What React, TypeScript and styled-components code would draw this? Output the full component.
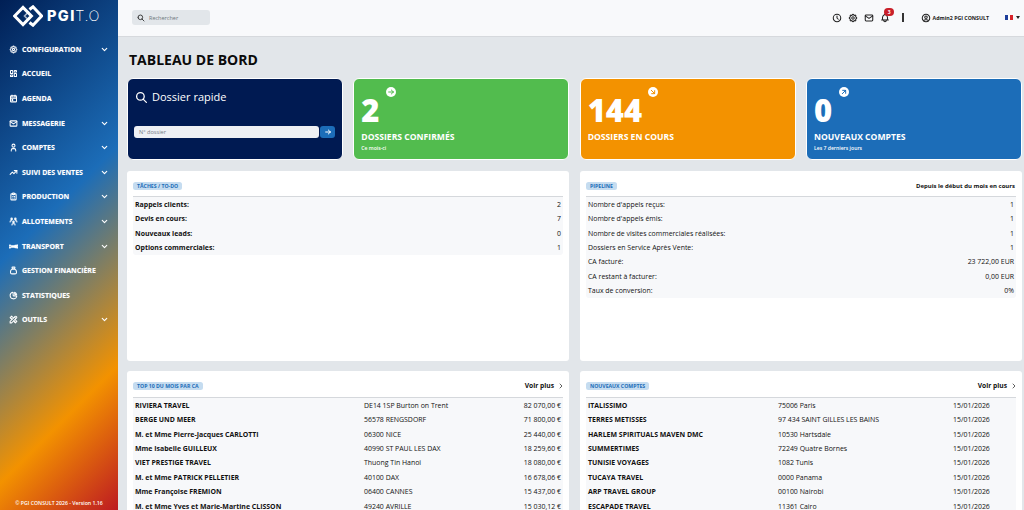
import React from "react";
import styled, { createGlobalStyle } from "styled-components";
import {
  TbSettings, TbLayoutDashboard, TbCalendarEvent, TbMail, TbUser, TbTrendingUp, TbClipboardList,
  TbUsersGroup, TbMoneybag, TbChartPie, TbTools, TbChevronDown, TbChevronRight, TbSearch,
  TbArrowRight, TbArrowDownRight, TbArrowUpRight, TbClock, TbBell, TbUserCircle,
} from "react-icons/tb";

const Global = createGlobalStyle`
  html, body { margin: 0; padding: 0; height: 510px; overflow: hidden; }
  body { font-family: "Open Sans", "Noto Sans", sans-serif; color: #111; }
  * { box-sizing: border-box; }
`;
const Shell = styled.div`display: flex; width: 1024px; height: 510px; overflow: hidden; background: #e2e6ea;`;
const Sidebar = styled.aside`
  width: 118px; flex: none; height: 510px; display: flex; flex-direction: column; color: #fff;
  background: linear-gradient(135deg, #001f55 0%, #1c6db8 42%, #f39200 77%, #bd1a22 100%);
`;
const Brand = styled.div`height: 37px; flex: none; display: flex; align-items: center; padding: 0 0 5px 13px; gap: 4px;`;
const BrandText = styled.div`display: flex; align-items: center; font-size: 14.5px; line-height: 24px; font-weight: 800; letter-spacing: 1.4px; font-family: "Inter", sans-serif;`;
const Thin = styled.span`font-weight: 200; letter-spacing: .6px; margin-left: -.5px;`;
const Nav = styled.nav`display: flex; flex-direction: column;`;
const NavItem = styled.div`
  height: 24.6px; display: flex; align-items: center; padding: 0 9px; gap: 4px;
  font-size: 7px; font-weight: 700; text-transform: uppercase; text-shadow: 0 0 1px rgba(255,255,255,.4); white-space: nowrap;
`;
const NavIcon = styled.span`
  width: 9px; height: 9px; flex: none; display: flex; font-size: 9px;
  svg { stroke-width: 2.7; }
`;
const NavLabel = styled.span`flex: 1;`;
const Chevron = styled.span`display: flex; font-size: 9px;`;
const Copy = styled.div`margin-top: auto; padding-bottom: 3px; text-align: center; font-size: 5.2px; line-height: 8px; font-weight: 600;`;

const Content = styled.div`flex: 1; min-width: 0; height: 510px; overflow: hidden; display: flex; flex-direction: column;`;
const Topbar = styled.header`
  height: 37px; flex: none; background: #f8f9fb; border-bottom: 1px solid #d6d9dd; display: flex; align-items: center; padding: 0 4px 1px 14px; color: #222;
`;
const Search = styled.div`width: 78px; height: 15px; border-radius: 3px; background: #e2e6ea; display: flex; align-items: center; gap: 4px; padding: 0 5px; font-size: 5.5px; color: #6d747b;`;
const HeaderRight = styled.div`margin-left: auto; display: flex; align-items: center;`;
const HeadIcon = styled.span<{ $last?: boolean }>`
  position: relative; width: 10px; height: 10px; display: flex; font-size: 10px; margin-right: ${p => (p.$last ? 0 : 6)}px;
  svg { stroke-width: 2.5; }
`;
const Badge = styled.span`
  position: absolute; top: -5px; left: 4px; width: 10px; height: 8px; border-radius: 4px; background: #c9202a; color: #fff; font-size: 5px; font-weight: 700; line-height: 8px; text-align: center;
`;
const Divider = styled.span`width: 1.5px; height: 9px; background: #333; margin: 0 17px 0 6px;`;
const UserName = styled.span`font-size: 5.25px; font-weight: 700; margin: 0 16px 0 2px; white-space: nowrap;`;
const Flag = styled.span`width: 8px; height: 5px; display: flex;`;
const Stripe = styled.span<{ $c: string }>`flex: 1; background: ${p => p.$c};`;
const Caret = styled.span`margin-left: 3px; width: 0; height: 0; border: 2px solid transparent; border-top: 3px solid #222; border-bottom: 0;`;

const Main = styled.main`flex: 1; padding: 14px 2px 0 9px; overflow: hidden;`;
const Title = styled.h1`margin: 0 0 9px 2px; font-size: 14px; line-height: 18px; font-weight: 700; color: #0b0b0b;`;
const Kpis = styled.section`display: grid; grid-template-columns: repeat(4, 216px); column-gap: 10.33px; margin-bottom: 11px;`;
const Kpi = styled.div<{ $bg: string }>`
  position: relative; height: 82px; border-radius: 6px; background: ${p => p.$bg}; border: 1px solid #fff; color: #fff; padding: 0 7px; overflow: hidden;
`;
const Number = styled.div`font-size: 31px; line-height: 32px; font-weight: 800; margin-top: 15px;`;
const KpiLabel = styled.div`font-size: 8.6px; line-height: 12px; font-weight: 700; margin-top: 5px; white-space: nowrap;`;
const KpiSub = styled.div`font-size: 5.1px; line-height: 8px; font-weight: 600; margin-top: 1px;`;
const Bubble = styled.span<{ $x: number; $c: string }>`
  position: absolute; top: 8px; left: ${p => p.$x}px; width: 10px; height: 10px; border-radius: 50%; background: #fff; color: ${p => p.$c}; display: flex; align-items: center; justify-content: center; font-size: 8px;
`;
const RapidHead = styled.div`display: flex; align-items: center; gap: 4px; margin-top: 11px; font-size: 11px; line-height: 14px; font-weight: 500;`;
const RapidForm = styled.div`display: flex; gap: 1.5px; margin: 22px 0 0 -1px;`;
const RapidInput = styled.div`width: 185.5px; height: 12px; border-radius: 3px; background: #eef0f4; color: #747b83; font-size: 5.6px; line-height: 12px; padding-left: 5px;`;
const RapidBtn = styled.span`width: 15px; height: 12px; border-radius: 3px; background: #1c6db8; color: #fff; display: flex; align-items: center; justify-content: center; font-size: 8px;`;

const Panels = styled.section`display: grid; grid-template-columns: 442px 442px; column-gap: 11px; row-gap: 10px;`;
const Panel = styled.div<{ $h: number }>`height: ${p => p.$h}px; background: #fff; border-radius: 3px; padding: 8px 6px 0 6px;`;
const PanelHead = styled.div<{ $h: number }>`height: ${p => p.$h}px; display: flex; align-items: flex-start; justify-content: space-between; border-bottom: 1px solid #d5d8dc;`;
const Tag = styled.span`
  margin-top: 3px; height: 8px; padding: 0 4px; border-radius: 2.5px; background: #c5dcf0; color: #1c6db8; font-size: 5.2px; line-height: 8px; font-weight: 700; white-space: nowrap;
`;
const HeadNote = styled.span`margin-top: 1px; font-size: 6px; line-height: 12px; font-weight: 700; padding-right: 1px;`;
const More = styled.span`display: flex; align-items: center; gap: 3px; font-size: 6.7px; line-height: 14px; font-weight: 700; margin-right: -2px;`;
const Rows = styled.div`background: #f7f8fa; border-radius: 0 0 3px 3px; padding-top: .7px;`;
const Row = styled.div<{ $cols?: string }>`
  height: 14.4px; display: grid; grid-template-columns: ${p => p.$cols ?? "1fr auto"}; align-items: center; padding: 0 2px; font-size: 6.95px; line-height: 14px; white-space: nowrap;
`;
const Cell = styled.span<{ $b?: boolean; $r?: boolean }>`
  font-weight: ${p => (p.$b ? 700 : 500)}; text-align: ${p => (p.$r ? "right" : "left")};
`;

const Logo = () => (
  <svg width="30" height="22" viewBox="0 0 30 22" fill="none" stroke="#fff" strokeWidth="3" strokeLinejoin="miter">
    <path d="M16.5 4.5 L20 1.8 L28.6 11 L20 20.2 L16.5 17.5" />
    <path d="M16 6.5 L11.5 11 L14 13.5" strokeWidth="1.6" strokeOpacity=".65" />
    <path d="M1.6 11 L10 2.5 L18.4 11 L10 19.5 Z" />
  </svg>
);
const TransportIcon = () => (
  <svg width="9" height="9" viewBox="0 0 9 9" fill="#fff" stroke="#fff" strokeWidth=".8">
    <circle cx="1" cy="4.5" r=".6" /><path d="M2.5 4.5h3.5M5.2 3.4L6.4 4.5 5.2 5.6" fill="none" /><circle cx="8" cy="4.5" r=".7" />
  </svg>
);

const nav: [string, React.ReactNode, boolean][] = [
  ["Configuration", <TbSettings />, true], ["Accueil", <TbLayoutDashboard />, false],
  ["Agenda", <TbCalendarEvent />, false], ["Messagerie", <TbMail />, true],
  ["Comptes", <TbUser />, true], ["Suivi des ventes", <TbTrendingUp />, true],
  ["Production", <TbClipboardList />, true], ["Allotements", <TbUsersGroup />, true],
  ["Transport", <TransportIcon />, true], ["Gestion financière", <TbMoneybag />, false],
  ["Statistiques", <TbChartPie />, false], ["Outils", <TbTools />, true],
];
const todo = [["Rappels clients:", "2"], ["Devis en cours:", "7"], ["Nouveaux leads:", "0"], ["Options commerciales:", "1"]];
const pipeline = [
  ["Nombre d'appels reçus:", "1"], ["Nombre d'appels émis:", "1"], ["Nombre de visites commerciales réalisées:", "1"],
  ["Dossiers en Service Après Vente:", "1"], ["CA facturé:", "23 722,00 EUR"], ["CA restant à facturer:", "0,00 EUR"], ["Taux de conversion:", "0%"],
];
const top10 = [
  ["RIVIERA TRAVEL", "DE14 1SP Burton on Trent", "82 070,00 €"], ["BERGE UND MEER", "56578 RENGSDORF", "71 800,00 €"],
  ["M. et Mme Pierre-Jacques CARLOTTI", "06300 NICE", "25 440,00 €"], ["Mme Isabelle GUILLEUX", "40990 ST PAUL LES DAX", "18 259,60 €"],
  ["VIET PRESTIGE TRAVEL", "Thuong Tin Hanoi", "18 080,00 €"], ["M. et Mme PATRICK PELLETIER", "40100 DAX", "16 678,06 €"],
  ["Mme Françoise FREMION", "06400 CANNES", "15 437,00 €"], ["M. et Mme Yves et Marie-Martine CLISSON", "49240 AVRILLE", "15 030,12 €"],
];
const comptes = [
  ["ITALISSIMO", "75006 Paris"], ["TERRES METISSES", "97 434 SAINT GILLES LES BAINS"], ["HARLEM SPIRITUALS MAVEN DMC", "10530 Hartsdale"],
  ["SUMMERTIMES", "72249 Quatre Bornes"], ["TUNISIE VOYAGES", "1082 Tunis"], ["TUCAYA TRAVEL", "0000 Panama"],
  ["ARP TRAVEL GROUP", "00100 Nairobi"], ["ESCAPADE TRAVEL", "11361 Cairo"],
];

export default function App() {
  return (
    <Shell>
      <Global />
      <Sidebar>
        <Brand><Logo /><BrandText>PGI<Thin>T.O</Thin></BrandText></Brand>
        <Nav>
          {nav.map(([label, icon, more]) => (
            <NavItem key={label}>
              <NavIcon>{icon}</NavIcon>
              <NavLabel>{label}</NavLabel>
              {more && <Chevron><TbChevronDown strokeWidth={3} /></Chevron>}
            </NavItem>
          ))}
        </Nav>
        <Copy>© PGI CONSULT 2026 - Version 1.16</Copy>
      </Sidebar>
      <Content>
        <Topbar>
          <Search><TbSearch size={8} color="#222" strokeWidth={2.5} />Rechercher</Search>
          <HeaderRight>
            <HeadIcon><TbClock /></HeadIcon>
            <HeadIcon><TbSettings /></HeadIcon>
            <HeadIcon><TbMail /></HeadIcon>
            <HeadIcon><TbBell /><Badge>3</Badge></HeadIcon>
            <Divider />
            <HeadIcon $last><TbUserCircle /></HeadIcon>
            <UserName>Admin2 PGI CONSULT</UserName>
            <Flag><Stripe $c="#1d3f9b" /><Stripe $c="#fff" /><Stripe $c="#d8232a" /></Flag>
            <Caret />
          </HeaderRight>
        </Topbar>
        <Main>
          <Title>TABLEAU DE BORD</Title>
          <Kpis>
            <Kpi $bg="#001a52">
              <RapidHead><TbSearch size={13} strokeWidth={2.4} />Dossier rapide</RapidHead>
              <RapidForm><RapidInput>N° dossier</RapidInput><RapidBtn><TbArrowRight strokeWidth={3} /></RapidBtn></RapidForm>
            </Kpi>
            <Kpi $bg="#52bc4e">
              <Bubble $x={32} $c="#52bc4e"><TbArrowRight strokeWidth={3} /></Bubble>
              <Number>2</Number><KpiLabel>DOSSIERS CONFIRMÉS</KpiLabel><KpiSub>Ce mois-ci</KpiSub>
            </Kpi>
            <Kpi $bg="#f39200">
              <Bubble $x={67} $c="#f39200"><TbArrowDownRight strokeWidth={3} /></Bubble>
              <Number>144</Number><KpiLabel>DOSSIERS EN COURS</KpiLabel>
            </Kpi>
            <Kpi $bg="#1c6db8">
              <Bubble $x={32} $c="#1c6db8"><TbArrowUpRight strokeWidth={3} /></Bubble>
              <Number>0</Number><KpiLabel>NOUVEAUX COMPTES</KpiLabel><KpiSub>Les 7 derniers jours</KpiSub>
            </Kpi>
          </Kpis>
          <Panels>
            <Panel $h={190}>
              <PanelHead $h={18}><Tag>TÂCHES / TO-DO</Tag></PanelHead>
              <Rows>{todo.map(([a, b]) => <Row key={a}><Cell $b>{a}</Cell><Cell $r>{b}</Cell></Row>)}</Rows>
            </Panel>
            <Panel $h={190}>
              <PanelHead $h={18}><Tag>PIPELINE</Tag><HeadNote>Depuis le début du mois en cours</HeadNote></PanelHead>
              <Rows>{pipeline.map(([a, b]) => <Row key={a}><Cell>{a}</Cell><Cell $r>{b}</Cell></Row>)}</Rows>
            </Panel>
            <Panel $h={170}>
              <PanelHead $h={19}><Tag>TOP 10 DU MOIS PAR CA</Tag><More>Voir plus<TbChevronRight size={8} /></More></PanelHead>
              <Rows>{top10.map(([a, b, c]) => <Row key={a} $cols="229px 1fr auto"><Cell $b>{a}</Cell><Cell>{b}</Cell><Cell $r>{c}</Cell></Row>)}</Rows>
            </Panel>
            <Panel $h={170}>
              <PanelHead $h={19}><Tag>NOUVEAUX COMPTES</Tag><More>Voir plus<TbChevronRight size={8} /></More></PanelHead>
              <Rows>{comptes.map(([a, b]) => <Row key={a} $cols="190px 175px 1fr"><Cell $b>{a}</Cell><Cell>{b}</Cell><Cell>15/01/2026</Cell></Row>)}</Rows>
            </Panel>
          </Panels>
        </Main>
      </Content>
    </Shell>
  );
}
